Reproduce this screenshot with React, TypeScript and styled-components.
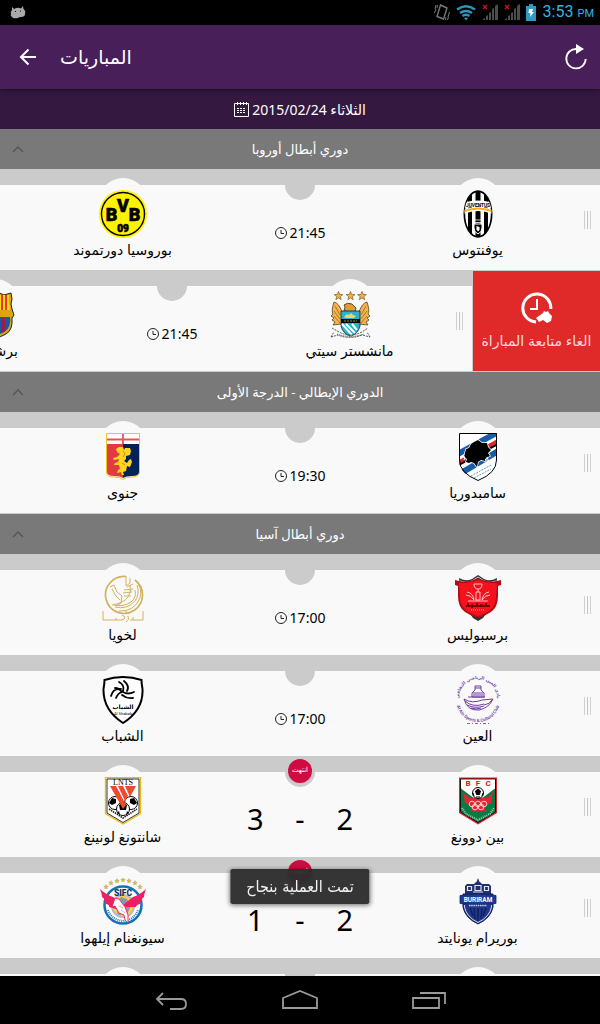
import React from "react";
import styled, { createGlobalStyle } from "styled-components";

const GlobalStyle = createGlobalStyle`
  * { box-sizing: border-box; }
  body { margin: 0; background: #cbcbcb; }
  button { border: 0; padding: 0; background: none; color: inherit; font: inherit; cursor: pointer; }
  ul, h1, h2, p { margin: 0; padding: 0; font-weight: normal; }
  ul { list-style: none; }
  svg { display: block; flex: none; }
`;

const Screen = styled.div`
  display: flex;
  flex-direction: column;
  height: 100vh;
  overflow: hidden;
  font-family: "Noto Sans", "DejaVu Sans", sans-serif;
  font-size: 13px;
  color: #000;
`;

const StatusBar = styled.div`
  flex: none;
  display: flex;
  align-items: center;
  justify-content: space-between;
  height: 25px;
  padding: 0 6px 0 10px;
  background: #000;
`;

const StatusIcons = styled.div`
  display: flex;
  align-items: center;
  gap: 6px;
`;

const Clock = styled.span`
  margin-left: 1px;
  font-family: Roboto, sans-serif;
  font-size: 16px;
  line-height: 24px;
  color: #33b5e5;
  small { font-size: 11px; margin-left: 4px; }
`;

const AppBar = styled.header`
  position: relative;
  z-index: 1;
  flex: none;
  display: flex;
  align-items: center;
  height: 64px;
  padding: 0 12px 0 16px;
  background: #491f5a;
  color: #fff;
  box-shadow: 0 1px 4px rgba(0, 0, 0, 0.5);
`;

const Title = styled.h1`
  flex: 1;
  padding-left: 20px;
  font-size: 19px;
  line-height: 24px;
`;

const DateBar = styled.button`
  flex: none;
  display: flex;
  align-items: center;
  justify-content: center;
  gap: 3px;
  height: 40px;
  width: 100%;
  background: #34183f;
  color: #fff;
  font-size: 14px;
`;

const Feed = styled.main`
  flex: 1;
  min-height: 0;
  overflow-y: auto;
  scrollbar-width: none;
`;

const League = styled.section`
  border-bottom: 1px solid #cbcbcb;
`;

const LeagueHeader = styled.button`
  display: grid;
  grid-template-columns: 12px 1fr 12px;
  align-items: center;
  width: 100%;
  height: 40px;
  padding: 0 12px;
  background: #797979;
  color: #fff;
`;

const Slider = styled.li`
  display: flex;
  justify-content: flex-end;
  height: 101px;
  overflow: hidden;
`;

const Match = styled.article`
  position: relative;
  flex: none;
  width: 100%;
  display: grid;
  grid-template-columns: 1fr 110px 1fr;
  direction: rtl;
  background: linear-gradient(#cbcbcb 16px, #f9f9f9 16px);
`;

const Team = styled.div`
  display: flex;
  flex-direction: column;
  align-items: center;
  padding-top: 9px;
`;

const CrestDisc = styled.div`
  display: flex;
  justify-content: center;
  width: 50px;
  height: 62px;
  padding-top: 12px;
  border-radius: 25px 25px 0 0;
  background: #f9f9f9;
`;

const TeamName = styled.p`
  font-size: 14px;
  line-height: 20px;
`;

const Middle = styled.div`
  display: flex;
  flex-direction: column;
  align-items: center;
`;

const Notch = styled.div`
  flex: none;
  display: flex;
  justify-content: center;
  width: 30px;
  height: 31px;
  padding-top: 3px;
  border-radius: 0 0 15px 15px;
  background: #cbcbcb;
`;

const Finished = styled.span`
  width: 24px;
  height: 24px;
  border-radius: 12px;
  background: #cf0b42;
  color: #fff;
  font: 7px/23px "DejaVu Sans", sans-serif;
  text-align: center;
`;

const Kickoff = styled.p`
  display: flex;
  align-items: center;
  gap: 3px;
  padding-top: 23px;
  direction: ltr;
  font-size: 14px;
  line-height: 20px;
`;

const Score = styled.p`
  display: flex;
  justify-content: space-between;
  width: 100%;
  padding: 12px 2px 0;
  direction: ltr;
  font-size: 29px;
  line-height: 40px;
`;

const Handle = styled.span`
  position: absolute;
  right: 9px;
  top: 42px;
  width: 7px;
  height: 18px;
  border: solid #d0d0d0;
  border-width: 0 1px;
  background: linear-gradient(90deg, transparent 2px, #c4c4c4 2px, #c4c4c4 3px, transparent 3px);
`;

const Unfollow = styled.button`
  flex: none;
  display: flex;
  flex-direction: column;
  align-items: center;
  gap: 6px;
  width: 127px;
  height: 100px;
  margin: 1px 0 0 1px;
  padding-top: 21px;
  background: #e02a2a;
  color: #fbdada;
  font-size: 14px;
  line-height: 20px;
  white-space: nowrap;
`;

const NavBar = styled.nav`
  flex: none;
  display: flex;
  justify-content: center;
  gap: 93px;
  height: 48px;
  background: #000;
`;

const NavButton = styled.button`
  display: flex;
  align-items: center;
`;

const Toast = styled.div`
  position: fixed;
  left: 50%;
  bottom: 120px;
  transform: translateX(-50%);
  padding: 0 16px;
  background: rgba(45, 45, 45, 0.96);
  border-radius: 2px;
  box-shadow: 0 1px 5px rgba(0, 0, 0, 0.6);
  color: #f3f3f3;
  font: 16px/35px "DejaVu Sans Condensed", "DejaVu Sans", sans-serif;
  white-space: nowrap;
`;

const star = (x: number, y: number, r: number) =>
  Array.from({ length: 10 }, (_, i) => {
    const q = i % 2 ? r * 0.42 : r;
    const a = (Math.PI / 5) * i - Math.PI / 2;
    return `${(x + q * Math.cos(a)).toFixed(1)},${(y + q * Math.sin(a)).toFixed(1)}`;
  }).join(" ");

const label = { textAnchor: "middle" as const, fontFamily: "Roboto, sans-serif", fontWeight: 700 };

const crests: Record<string, React.ReactNode> = {
  dortmund: (
    <>
      <circle cx="24" cy="24" r="24" fill="#fff200" />
      <circle cx="24" cy="24" r="21.5" fill="none" stroke="#000" strokeWidth="1.4" />
      <g {...label} fontWeight={900} stroke="#000" strokeWidth=".6">
        <text x="12.5" y="31" fontSize="18">B</text>
        <text x="24" y="22" fontSize="18">V</text>
        <text x="35.5" y="31" fontSize="18">B</text>
        <text x="24" y="41.5" fontSize="10">09</text>
      </g>
    </>
  ),
  juventus: (
    <>
      <clipPath id="juve"><ellipse cx="24" cy="24" rx="13.5" ry="22.5" /></clipPath>
      <ellipse cx="24" cy="24" rx="14.5" ry="23.8" />
      <ellipse cx="24" cy="24" rx="12.8" ry="22" fill="#fff" />
      <g clipPath="url(#juve)">
        <path d="M14 3h4v42h-4zM21.5 1h5v46h-5zM30 3h4v42h-4z" />
        <path d="M9 19v-6q15-5 30 0v6q-15-5-30 0z" fill="#fff" />
        <path d="M9 22q15-6 30 0" fill="none" stroke="#fff" strokeWidth="4" />
        <path d="M9 21.5q15-6 30 0" fill="none" stroke="#f7b21c" strokeWidth="2" />
      </g>
      <text {...label} x="24" y="17" fontSize="4.8">JUVENTUS</text>
      <path d="M20 34h8v4q0 4-4 6-4-2-4-6z" stroke="#fff" />
      <path d="M22.5 36l3 1v3l-1.500 1.500-1.500-2z" fill="#fff" />
      <path d="M21 30h6v2.500h-6z" fill="#000" stroke="#fff" strokeWidth=".8" />
    </>
  ),
  barcelona: (
    <>
      <path d="M8 2l7 2 9-4 9 4 7-2 1 6q-2 5 0 10l2 6-2 3q1 12-6 16-5 3-11 4-6-1-11-4-7-4-6-16l-2-3 2-6q2-5 0-10z" fill="#dca50e" stroke="#222" />
      <path d="M10 6h13v13H9z" fill="#fff" />
      <path d="M14 6h3v13h-3zM9 11h14v3H9z" fill="#d4213d" />
      <path d="M24 4h14v6l1 9H24z" fill="#fad81b" />
      <path d="M26 4h2v15h-2zM30 4h2v15h-2zM34 4h2v15h-2z" fill="#e5382c" />
      <path d="M9 26h30q2 16-15 18Q7 42 9 26z" fill="#1759a5" />
      <path d="M13 26h4v15l-4-3zM22 26h4v17h-4zM30 26h4v14l-4 2z" fill="#a61b45" />
      <text {...label} x="24" y="24.5" fontSize="5.5">FCB</text>
    </>
  ),
  city: (
    <>
      {[12.5, 24.5, 36].map((x) => (
        <polygon key={x} points={star(x, 5, 4.6)} fill="#f0b244" stroke="#6b4a10" strokeWidth=".6" />
      ))}
      <path d="M16 21q-3-9-8-10-3 9-1 12l-2 2 3 2-2 2 3 2-2 3 9-1zM33 21q3-9 8-10 3 9 1 12l2 2-3 2 2 2-3 2 2 3-9-1z" fill="#f3b450" stroke="#5c4317" strokeWidth=".8" />
      <path d="M9 15l5 9M8 20l6 8M8 25l6 7M40 15l-5 9M41 20l-6 8M41 25l-6 7" stroke="#87601d" strokeWidth=".7" />
      <path d="M18 20l1-4-1-2q3-3 8-1l4 4-1 4z" fill="#dd9d37" stroke="#3a2a10" strokeWidth=".8" />
      <path d="M15 20h19v15q-2 8-9.500 10Q17 43 15 35z" fill="#26b5cf" stroke="#123" strokeWidth=".8" />
      <path d="M18 26l3-3 2 1 2-2 2 2 3 1-2 2h-8z" fill="#f6d362" />
      <path d="M15 28h19v4H15z" fill="#080808" />
      <path d="M18 30h13" stroke="#a98a3a" strokeDasharray="2 1" />
      <path d="M16 33l10 11M20 33l9 9M26 33l5 6" stroke="#fff" strokeWidth="2" />
      <path d="M6 37l7 4q11 6 23 0l6-4M5 46l7-2q12 5 24 0l8 2M5 46l3-5M44 46l-3-5" fill="none" stroke="#555" strokeDasharray="2 1" />
      <path d="M11 43q13 5 27 0" fill="none" stroke="#444" strokeDasharray="1 1" />
    </>
  ),
  genoa: (
    <>
      <path d="M7.500.500h33V40q-1 4-8 4-6 0-8.500 2.500Q21 44 15 44q-7 0-7.500-4z" fill="#fff" stroke="#f2c51d" />
      <path d="M8 11h16v34q-3-2-9-2-7 0-7-4z" fill="#e23a43" />
      <path d="M24 11h16v28q0 4-7 4-6 0-9 2z" fill="#04215b" />
      <path d="M8 6.500h32M24 1v10" stroke="#df5460" strokeWidth="1.800" />
      <path d="M20 14l4 0 1 3 1-2 5 0 1 3-1 4-4 1 0 3-2 2 3 2 2-3 2-1 1 3-2 5-3-1-1 5-3 1 1 3h-2l-1-3-4 1 1-3 2-1-1-4-5 0 1-2 3-1 1-3-5 1-1-2 4-1 3-3-3-2-1-3z" fill="#ffd51e" />
      <path d="M24 18l2 3-2 3M23 30l3 2" stroke="#a77b10" fill="none" strokeWidth=".8" />
    </>
  ),
  sampdoria: (
    <>
      <clipPath id="samp"><path d="M5 0h38v27q0 14-19 21Q5 41 5 27z" /></clipPath>
      <g clipPath="url(#samp)">
        <path d="M0 0h48v48H0z" fill="#fff" />
        <path d="M2 22L46-2M2 43L46 17" stroke="#155da9" strokeWidth="6" />
        <path d="M2 31L46 7" stroke="#e02531" strokeWidth="4" />
        <path d="M2 33.500L46 10" stroke="#000" strokeWidth="2" />
        <path d="M17 43l20-11M20 45l17-9" stroke="#6c9dcc" strokeDasharray="2 1" />
        <path d="M20 9l4-2 4 3h5l1 4 3 3-3 3 2 3-4 2-1 3-4-1-3 2-1 5-3-4-3-1-2 1-3-1 1-3-3-2 1-4 1-4 3-1 2-4z" stroke="#fff" strokeWidth="1.500" paintOrder="stroke" />
        <path d="M8 23l3 1-1 3M31 26l4 3-2-5" stroke="#fff" fill="none" />
      </g>
      <path d="M5.500.500h37V27q0 13-18.500 20.500Q5.500 40 5.500 27z" fill="none" stroke="#000" />
    </>
  ),
  lekhwiya: (
    <g fill="none" stroke="#d2b25f">
      <path d="M27 1.500A18.500 18.500 0 1 0 36 5" strokeWidth="1.700" />
      <path d="M36 5q8 8 5 18-6 14-21 13M38 10q3 9-2 16-8 9-20 6M36 15q2 7-4 12-7 5-17 3" />
      <path d="M11 12l4-2 3 7 5 4-1 7-5 3M13 14l4 7 4 4M13 30q12-2 16-8 4-6 2-12M27 1v10l4-3V3M25 15l9-1M24 18l9-1M25 21l7 0M28 12l6-3" />
      <path d="M4 36v9h18q4 0 4-3l-3-2M29 41q2 4-2 6M31 45h13v-9" />
      <path d="M17 45v-2M34 45v-3M26 37h2" />
    </g>
  ),
  shabab: (
    <>
      <path d="M5.500 4Q24-2 42.500 4q0 4 1 9 1 21-19.500 34Q4 34 4.500 13q1-5 1-9z" fill="#fff" stroke="#000" strokeWidth="2" />
      <g fill="none" stroke="#000" strokeWidth="1.800" strokeLinecap="round">
        <path d="M20 6q6 3 4 9M25 5q6 5 3 10M16 12q4 0 7 4-4 1-6 6M22 13q-8-1-10 7M24 16q5 3 11 0M23 19q5 4 11 3" />
      </g>
      <text {...label} x="24" y="33" fontSize="6" fontFamily="DejaVu Sans, sans-serif">الشباب</text>
      <text {...label} x="24" y="39" fontSize="4" fontWeight={400}>Al Shabab</text>
    </>
  ),
  persepolis: (
    <>
      <path d="M5 3q7 4 13 1l6-4 6 4q6 3 13-1l-1 8H6zM14 36l5 7 5 3 5-3 5-7z" fill="#303236" />
      <path d="M6 6q7 3 12 0l6-4 6 4q5 3 12 0" fill="none" stroke="#fff" strokeWidth=".8" />
      <path d="M1 5l4 1q10 2 19-3 9 5 19 3l4-1v5l-3 1v10q0 11-7 16-6 4-13 6-7-2-13-6-7-5-7-16V11L1 10z" fill="#b30d16" />
      <path d="M5 8q10 1 19-3 9 4 19 3l-1 13q0 10-7 15-5 3-11 5-6-2-11-5-7-5-7-15z" fill="#f5121d" />
      <path d="M20 9h8q0 5-4 5t-4-5zM24 14v3M22 17h4v8h-4zM13 17q6 1 7 8M35 17q-6 1-7 8M12 20q5 0 8 5M36 20q-5 0-8 5M14 26h20" fill="none" stroke="#ffd6d8" strokeWidth=".9" />
      <path d="M12 31h24M14 28v3M18 29v4M23 28v3M27 29v3M32 28v3" stroke="#500" strokeWidth="1.500" />
      <path d="M17 35h14" stroke="#ffc0c0" strokeDasharray="1 1" />
    </>
  ),
  ain: (
    <>
      <path id="ainTop" d="M6 28A19 19 0 1 1 42 28" fill="none" />
      <path id="ainLow" d="M2 24A22 22 0 0 0 46 24" fill="none" />
      <g {...label} fill="#7a4bab">
        <text fontSize="4.4"><textPath href="#ainTop" startOffset="50%" fontFamily="DejaVu Sans, sans-serif">نادي العين الرياضي الثقافي</textPath></text>
        <text fontSize="4.4"><textPath href="#ainLow" startOffset="50%">Al Ain Sports &amp; Cultural Club</textPath></text>
      </g>
      <g fill="none" stroke="#6f3aa5">
        <path d="M21 10h6v4l3 3v4H18v-4l3-3zM21 12h6M19 17h10M19 19h10" />
        <path d="M10 23q8 5 18 1l11-1q-4 9-14 11-12 1-15-11zM11 25q8 7 19 3M13 29q8 4 17 1M17 32q5 2 10 0M14 21h17" />
        <path d="M30 29q6-1 8-5" />
      </g>
      <path d="M13 47.500h22" stroke="#8d66b8" strokeDasharray="3 2 1 2" />
    </>
  ),
  luneng: (
    <>
      <path d="M6.500.500h35v36L24 47 6.500 36.500z" fill="#fff" stroke="#efbd12" strokeWidth="1.400" />
      <path d="M8 2h32v34L24 45.500 8 36z" fill="none" stroke="#000" strokeWidth=".8" />
      <circle cx="16" cy="26" r="6.500" fill="#fff" stroke="#000" />
      <circle cx="32" cy="26" r="6.500" fill="#fff" stroke="#000" />
      <circle cx="24" cy="32" r="6.500" fill="#fff" stroke="#000" />
      <path d="M13 21l4 1 0 4-4 2-3-2zM35 21l-4 1 0 4 4 2 3-2zM20 28l4-3 4 3-1 5h-6zM18 36l3 2-1-4zM30 36l-3 2 1-4z" />
      <path d="M11 9h6l10 19-3 4zM19 9h5l5 10-3 5zM26 9h11l-6 11z" fill="#f04a2a" />
      <path d="M10 32l14 9 14-9" fill="none" stroke="#222" strokeWidth="1.600" strokeDasharray="1.500 .8" />
      <text x="24" y="8" textAnchor="middle" fontSize="8" fontFamily="Liberation Serif, serif">LNTS</text>
    </>
  ),
  binh: (
    <>
      <path d="M5 .500h38V36L24 47.500 5 36z" fill="#d9252d" />
      <path d="M6.500 2h35v33L24 45.500 6.500 35z" fill="#087a43" stroke="#000" strokeWidth=".8" />
      <path d="M7 2.500h34v9l-12 9H19L7 11.500z" fill="#fff" />
      <path d="M9 14q3 7 10 7h10q7 0 10-7l-2 12-6 3v5H17v-5l-6-3z" fill="#e02731" />
      <circle cx="24" cy="16" r="5.500" fill="#fff" stroke="#000" />
      <path d="M21.500 14l2.500-2 2.500 2-1 3.500h-3zM19 16l1 3M29 16l-1 3M22 20h4" stroke="#000" />
      <g fill="none" stroke="#ffd9d9" strokeWidth=".9">
        <circle cx="18" cy="27" r="2.800" /><circle cx="24" cy="27" r="2.800" /><circle cx="30" cy="27" r="2.800" />
        <circle cx="21" cy="30" r="2.800" /><circle cx="27" cy="30" r="2.800" />
      </g>
      <path d="M8 31l4 6 12 6 12-6 4-6" fill="none" stroke="#9fd6b6" strokeWidth="2" strokeDasharray="1 1" />
      <g {...label} fill="#e0131c" fontSize="8"><text x="14" y="9">B</text><text x="24" y="9">F</text><text x="34" y="9">C</text></g>
    </>
  ),
  sifc: (
    <>
      {[[7, 9], [12, 5], [18, 3], [24, 2], [30, 3], [36, 5], [41, 9]].map(([x, y]) => (
        <polygon key={x} points={star(x, y, 2.4)} fill="#f2bf16" stroke="#777" strokeWidth=".3" />
      ))}
      <circle cx="24" cy="27" r="18.500" fill="#fff" stroke="#1272b6" strokeWidth="2.500" />
      <circle cx="24" cy="28" r="11" fill="#f4d44a" stroke="#bbb" strokeWidth="2" />
      <path d="M16 25l6-6 6 2 4 7-4 8-9 1z" fill="#8c98a4" />
      <path d="M9 32q4 10 15 11 11-1 15-11" fill="none" stroke="#2a75ae" strokeWidth="2" strokeDasharray="1 1" />
      <path d="M1 11q5 5 13 8l6 4-3 8-7-2q1-2-3-3 0-2-2-4 1-1-2-3 0-3-2-8zM47 11q-5 5-13 8l-10 8 3 2 10 0q0-2 4-3 0-2 2-4-1-1 2-3 0-3 2-8z" fill="#ee1f62" />
      <path d="M16 20l4 1 6 8 3 8 0 8-3-3-1-5-5-2-4-7-3 1z" fill="#fff" stroke="#ee1f62" strokeWidth=".9" />
      <path d="M22 32l4 3M20 28l4 2" stroke="#ee6b96" strokeWidth=".7" />
      <text {...label} x="24" y="17.500" fontSize="8.500" fontWeight={900} fill="#17345e">SIFC</text>
    </>
  ),
  buriram: (
    <>
      <path d="M24 0l1.500 4h-3zM11 8l2-2h7l2-2h4l2 2h7l2 2v9H11z" fill="#22306e" />
      <path d="M13.500 8.500h4v4h-4zM30.500 8.500h4v4h-4zM21 7.500h6v5h-6zM19 14h10" fill="none" stroke="#dfe5f5" strokeWidth="1.200" />
      <path d="M9 16h30v13q-2 11-15 17Q11 40 9 29z" fill="#20378c" stroke="#101f55" />
      <path d="M10.500 27v2q2 10 13.500 15.500Q35.500 39 37.500 29v-2" fill="none" stroke="#fff" strokeWidth=".8" />
      <path d="M24 30v13M20 30l1 11M28 30l-1 11M16 30l3 8M32 30l-3 8" stroke="#0d1c55" strokeWidth="1.200" />
      <path d="M6 17.500q18-3 36 0v8q-18 2-36 0z" fill="#1d3a91" stroke="#14255e" strokeWidth=".8" />
      <text {...label} x="24" y="23.500" fontSize="6.500" fill="#fff">BURIRAM</text>
      <path d="M15 27.500h18" stroke="#c8d3f2" strokeWidth="1.600" strokeDasharray="1.500 .7" />
    </>
  ),
};

interface Side { name: string; crest: string }
interface Fixture { home: Side; away: Side; time?: string; score?: [number, number]; open?: boolean }

const side = (name: string, crest: string): Side => ({ name, crest });

const leagues: { name: string; fixtures: Fixture[] }[] = [
  {
    name: "دوري أبطال أوروبا",
    fixtures: [
      { home: side("يوفنتوس", "juventus"), away: side("بوروسيا دورتموند", "dortmund"), time: "21:45" },
      { home: side("مانشستر سيتي", "city"), away: side("برشلونة", "barcelona"), time: "21:45", open: true },
    ],
  },
  {
    name: "الدوري الإيطالي - الدرجة الأولى",
    fixtures: [{ home: side("سامبدوريا", "sampdoria"), away: side("جنوى", "genoa"), time: "19:30" }],
  },
  {
    name: "دوري أبطال آسيا",
    fixtures: [
      { home: side("برسبوليس", "persepolis"), away: side("لخويا", "lekhwiya"), time: "17:00" },
      { home: side("العين", "ain"), away: side("الشباب", "shabab"), time: "17:00" },
      { home: side("بين دوونغ", "binh"), away: side("شانتونغ لونينغ", "luneng"), score: [2, 3] },
      { home: side("بوريرام يونايتد", "buriram"), away: side("سيونغنام إيلهوا", "sifc"), score: [2, 1] },
      { home: side("", ""), away: side("", "") },
    ],
  },
];

const TeamSide = ({ name, crest }: Side) => (
  <Team>
    <CrestDisc>
      <svg width="48" height="48" viewBox="0 0 48 48" aria-hidden="true">{crests[crest]}</svg>
    </CrestDisc>
    <TeamName>{name}</TeamName>
  </Team>
);

const ClockIcon = () => (
  <svg width="12" height="12" viewBox="0 0 12 12" fill="none" stroke="#222" aria-hidden="true">
    <circle cx="6" cy="6" r="5.500" />
    <path d="M6 3v3.500h3" />
  </svg>
);

const MatchRow = ({ home, away, time, score, open }: Fixture) => (
  <Slider>
    <Match>
      <TeamSide {...home} />
      <Middle>
        <Notch>{score && <Finished>انتهت</Finished>}</Notch>
        {time && <Kickoff><ClockIcon />{time}</Kickoff>}
        {score && <Score><span>{score[1]}</span><span>-</span><span>{score[0]}</span></Score>}
      </Middle>
      <TeamSide {...away} />
      <Handle />
    </Match>
    {open && (
      <Unfollow type="button">
        <svg width="32" height="33" viewBox="0 0 32 33" fill="none" stroke="#fff" aria-hidden="true">
          <path d="M29.800 17A14 14 0 1 0 15 30" strokeWidth="3" />
          <path d="M16 7v10H9" strokeWidth="2" />
          <path d="M15 26l7-5 1-2 2 1 2-1 1 2 3 3-1 5-4 2-4-3-4 2z" fill="#fff" stroke="none" />
        </svg>
        الغاء متابعة المباراة
      </Unfollow>
    )}
  </Slider>
);

const Signal = () => (
  <svg width="16" height="17" viewBox="0 0 16 17" aria-hidden="true">
    <path d="M0 16l3-2v2zM4 16v-4l2-1v5zM7 16v-7l2-1v8zM10 16V5l2-1v12zM13 16V2l3-2v16z" fill="#4d4d4d" />
    <path d="M1 1l4 4M5 1l-4 4" stroke="#d0141b" strokeWidth="1.300" />
  </svg>
);

export default function App() {
  return (
    <Screen>
      <GlobalStyle />
      <StatusBar>
        <svg width="16" height="13" viewBox="0 0 16 13" aria-hidden="true">
          <path d="M2 1l2 2q4-2 7-.500L13 0l.500 3Q16 5 15 8q0 3-4 3-2 0-3 1-5 1-6-1-2-1-1-3-1-2 1-4z" fill="#a9a9a9" />
          <circle cx="5.500" cy="5.500" r=".6" /><circle cx="10.500" cy="5" r=".6" />
        </svg>
        <StatusIcons>
          <svg width="16" height="17" viewBox="0 0 16 17" fill="none" stroke="#777" aria-hidden="true">
            <path d="M6.500 1L13 4 9.500 15 3 12.500z" strokeWidth="1.400" />
            <path d="M1 5l1-4M3 4l.500-3M.500 9L2 5M15.500 8L14 13M14.500 13l-1 3M12 13l-.500 3" />
          </svg>
          <svg width="20" height="16" viewBox="0 0 20 16" fill="none" stroke="#3094bd" strokeWidth="2.400" aria-hidden="true">
            <path d="M1 4.500Q10-2 19 4.500M4 8q6-4 12 0M6.500 11q3.500-2.500 7 0" />
            <path d="M8 13q2-1 4 0l-2 2.500z" fill="#3094bd" stroke="none" />
          </svg>
          <Signal />
          <Signal />
          <svg width="10" height="17" viewBox="0 0 10 17" aria-hidden="true">
            <path d="M3 0h4v2h3v15H0V2h3z" fill="#3099c4" />
            <path d="M3 5h4L6 8h2l-4 5 .500-4H2.500z" fill="#fff" />
          </svg>
          <Clock>3:53<small>PM</small></Clock>
        </StatusIcons>
      </StatusBar>

      <AppBar>
        <button type="button" aria-label="رجوع">
          <svg width="24" height="24" viewBox="0 0 24 24" fill="none" stroke="#fff" strokeWidth="2" aria-hidden="true">
            <path d="M20 12H6M12.500 4.500L5 12l7.500 7.500" />
          </svg>
        </button>
        <Title>المباريات</Title>
        <button type="button" aria-label="تحديث">
          <svg width="24" height="26" viewBox="0 0 24 26" fill="none" aria-hidden="true">
            <path d="M12.500 5A9.700 9.700 0 1 0 21.700 15" stroke="#fff" strokeWidth="1.800" />
            <path d="M12 0l8 5-8 5z" fill="#fff" />
          </svg>
        </button>
      </AppBar>

      <DateBar type="button">
        <svg width="15" height="15" viewBox="0 0 15 15" fill="none" stroke="#fff" aria-hidden="true">
          <path d="M.500 1.500h14v13H.500zM3.500 0v3M6.500 0v3M9.500 0v3M12.500 0v3" />
          <path d="M3 6.500h9M3 8.500h9M3 10.500h9" strokeDasharray="2 1" />
        </svg>
        <span dir="rtl">الثلاثاء 2015/02/24</span>
      </DateBar>

      <Feed>
        {leagues.map((league) => (
          <League key={league.name}>
            <LeagueHeader type="button" aria-expanded="true">
              <svg width="12" height="8" viewBox="0 0 12 8" fill="none" stroke="#555" strokeWidth="1.400" aria-hidden="true">
                <path d="M1 7l5-5 5 5" />
              </svg>
              <span dir="rtl">{league.name}</span>
            </LeagueHeader>
            <ul>
              {league.fixtures.map((fixture, i) => <MatchRow key={i} {...fixture} />)}
            </ul>
          </League>
        ))}
      </Feed>

      <Toast role="status" dir="rtl">تمت العملية بنجاح</Toast>

      <NavBar>
        <NavButton type="button" aria-label="Back">
          <svg width="34" height="20" viewBox="0 0 34 20" fill="none" stroke="#9a9a9a" strokeWidth="1.800" aria-hidden="true">
            <path d="M9 3L3 9l6 6M3 9h24q5 0 5 5t-5 5H16" />
          </svg>
        </NavButton>
        <NavButton type="button" aria-label="Home">
          <svg width="38" height="20" viewBox="0 0 38 20" fill="none" stroke="#9a9a9a" strokeWidth="1.800" aria-hidden="true">
            <path d="M2 18V8l17-7 17 7v10z" />
          </svg>
        </NavButton>
        <NavButton type="button" aria-label="Recent apps">
          <svg width="34" height="20" viewBox="0 0 34 20" fill="none" stroke="#9a9a9a" strokeWidth="1.800" aria-hidden="true">
            <path d="M1 8h26v10H1zM8 3h25v11" />
          </svg>
        </NavButton>
      </NavBar>
    </Screen>
  );
}
